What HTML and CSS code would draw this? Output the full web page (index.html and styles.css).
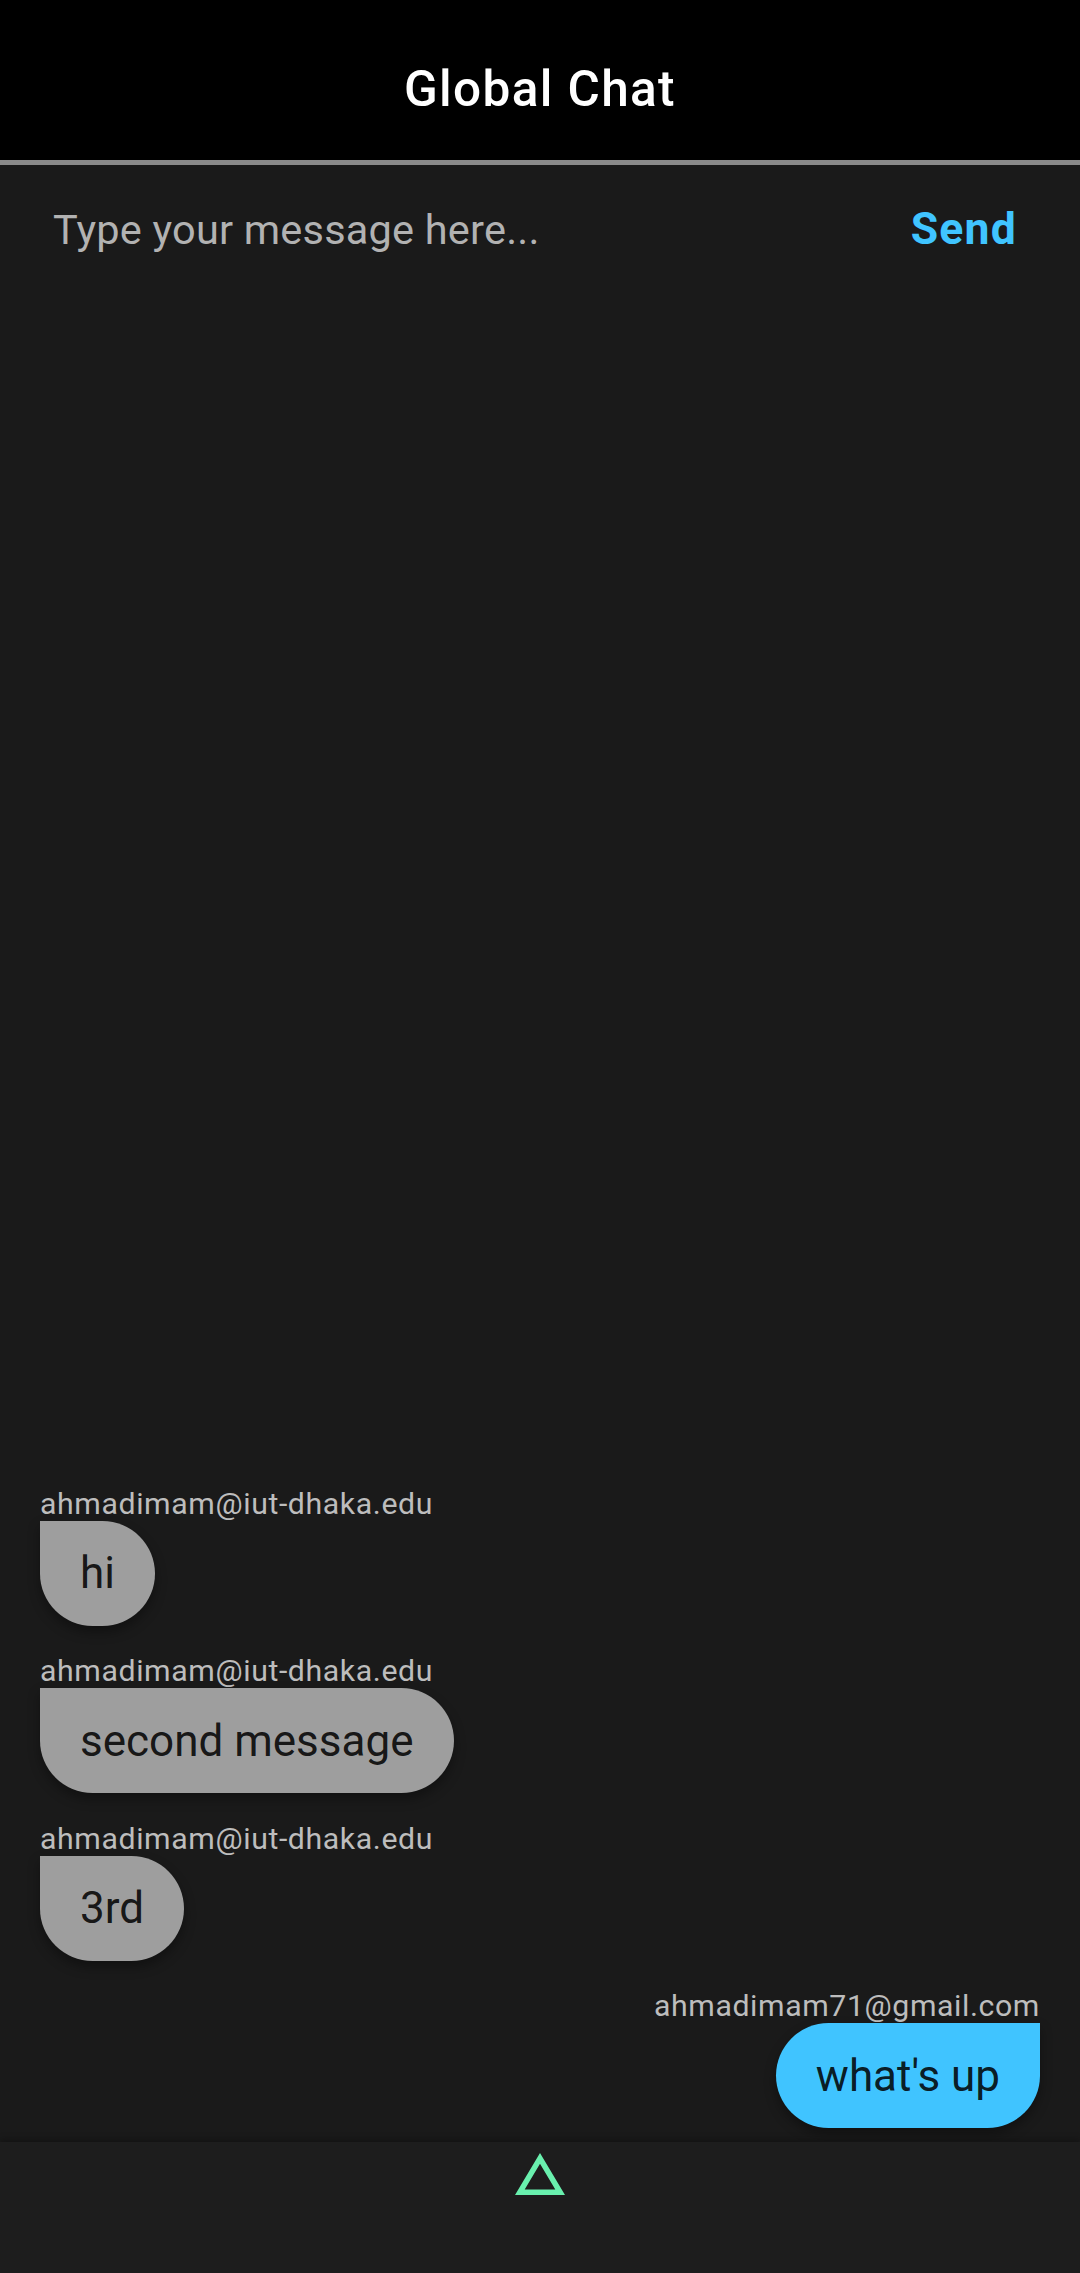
FILE: index.html
```html
<!DOCTYPE html>
<html lang="en">
<head>
<meta charset="utf-8">
<title>Global Chat</title>
<link rel="stylesheet" href="styles.css">
</head>
<body>
<div class="app">
  <header class="appbar">
    <h1 class="title">Global Chat</h1>
  </header>
  <div class="composer">
    <span class="placeholder">Type your message here...</span>
    <span class="send">Send</span>
  </div>
  <main class="chat">
    <div class="msg other">
      <div class="sender">ahmadimam@iut-dhaka.edu</div>
      <div class="bubble">hi</div>
    </div>
    <div class="msg other">
      <div class="sender">ahmadimam@iut-dhaka.edu</div>
      <div class="bubble">second message</div>
    </div>
    <div class="msg other">
      <div class="sender">ahmadimam@iut-dhaka.edu</div>
      <div class="bubble">3rd</div>
    </div>
    <div class="msg mine">
      <div class="sender">ahmadimam71@gmail.com</div>
      <div class="bubble">what's up</div>
    </div>
  </main>
  <footer class="navbar">
    <svg class="tri" width="50" height="42" viewBox="0 0 50 42">
      <path fill="#69f0ae" fill-rule="evenodd" d="M25 0 L50 42 L0 42 Z M25 10.8 L9.7 36.5 L40.3 36.5 Z"/>
    </svg>
  </footer>
</div>
</body>
</html>
```

FILE: styles.css
```css
* { box-sizing: border-box; }
html, body {
  margin: 0;
  padding: 0;
  background: #1a1a1a;
}
body {
  font-family: Roboto, "Noto Sans", sans-serif;
}
.app {
  width: 1080px;
  height: 2273px;
  display: flex;
  flex-direction: column;
  background: #1a1a1a;
}
.appbar {
  height: 165px;
  flex: 0 0 165px;
  background: #000;
  border-bottom: 5px solid #8a8a8a;
  padding-top: 60px;
  text-align: center;
}
.title {
  margin: 0;
  font-size: 49.5px;
  font-weight: 500;
  line-height: 58px;
  letter-spacing: 1.375px;
  color: #fff;
}
.composer {
  display: flex;
  align-items: center;
  justify-content: space-between;
  padding: 38px 63px 0 53px;
}
.placeholder {
  font-size: 41.5px;
  letter-spacing: 0.2px;
  color: #b2b2b2;
}
.send {
  font-size: 44.5px;
  font-weight: 700;
  letter-spacing: 1.2px;
  color: #40c4ff;
}
.chat {
  flex: 1;
  display: flex;
  flex-direction: column;
  justify-content: flex-end;
  padding: 0 40px;
}
.msg {
  display: flex;
  flex-direction: column;
  padding: 13.75px 0;
}
.msg.other { align-items: flex-start; }
.msg.mine { align-items: flex-end; }
.sender {
  font-size: 30.25px;
  letter-spacing: 0.6px;
  color: #bdbdbd;
}
.bubble {
  font-size: 44px;
  line-height: 50px;
  padding: 27.5px 40px;
  color: rgba(0, 0, 0, 0.87);
  box-shadow: 0 6px 12px rgba(0, 0, 0, 0.35);
}
.other .bubble {
  background: #9e9e9e;
  border-radius: 0 82.5px 82.5px 82.5px;
}
.mine .bubble {
  background: #40c4ff;
  border-radius: 82.5px 0 82.5px 82.5px;
}
.navbar {
  flex: 0 0 131px;
  background: #1d1d1d;
  box-shadow: 0 -3px 6px rgba(0, 0, 0, 0.25);
  display: flex;
  justify-content: center;
  align-items: flex-start;
  padding-top: 11px;
}
.tri { display: block; }
```
